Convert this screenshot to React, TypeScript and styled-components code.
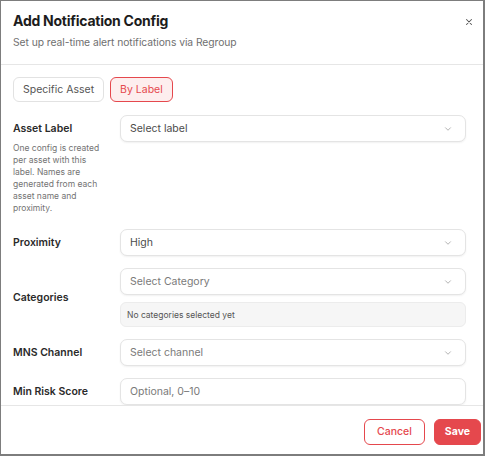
import React from 'react';
import styled, { createGlobalStyle } from 'styled-components';

const GlobalStyle = createGlobalStyle`
  html, body {
    margin: 0;
    padding: 0;
    background: #ffffff;
  }
  body {
    font-family: Inter, "Noto Sans", sans-serif;
    color: #1f1f1f;
  }
  * {
    box-sizing: border-box;
  }
`;

const Dialog = styled.div`
  width: 485px;
  height: 456px;
  display: flex;
  flex-direction: column;
  background: #ffffff;
  border: 1px solid #7d7d7d;
  border-right-width: 2px;
  border-bottom-width: 2px;
  overflow: hidden;
`;

const Header = styled.header`
  position: relative;
  flex: none;
  height: 64px;
  padding: 11px 13px 0 12px;
  border-bottom: 1px solid #e6e6e6;
`;

const Title = styled.h2`
  margin: 0;
  font-size: 14px;
  line-height: 18px;
  font-weight: 700;
  letter-spacing: -0.25px;
  color: #1c1c1c;
`;

const Subtitle = styled.p`
  margin: 5px 0 0;
  font-size: 10.3px;
  line-height: 14px;
  letter-spacing: -0.05px;
  color: #6f6f6f;
`;

const CloseButton = styled.button`
  position: absolute;
  top: 15px;
  right: 8px;
  width: 12px;
  height: 12px;
  padding: 0;
  border: none;
  background: none;
  color: #555555;
  cursor: pointer;
  display: flex;
  align-items: center;
  justify-content: center;
`;

const Body = styled.div`
  flex: 1;
  min-height: 0;
  overflow: hidden;
  padding: 12px 17px 0 12px;
`;

const Tabs = styled.div`
  display: flex;
  gap: 6px;
  margin-bottom: 13px;
`;

const Tab = styled.button<{ $active?: boolean }>`
  height: 25px;
  padding: 0 9px;
  border-radius: 6px;
  font-family: inherit;
  font-size: 10.5px;
  cursor: pointer;
  border: 1px solid ${(p) => (p.$active ? '#e5484d' : '#e2e2e2')};
  background: ${(p) => (p.$active ? '#fdeeee' : '#ffffff')};
  color: ${(p) => (p.$active ? '#e5484d' : '#555555')};
`;

const Form = styled.div`
  display: grid;
  grid-template-columns: 95px 1fr;
  column-gap: 12px;
  row-gap: 12px;
  align-items: center;
`;

const LabelCell = styled.div<{ $top?: boolean }>`
  align-self: ${(p) => (p.$top ? 'start' : 'center')};
  padding: ${(p) => (p.$top ? '7px 0 3px' : '0')};
`;

const FieldLabel = styled.label`
  display: block;
  font-size: 10.5px;
  font-weight: 600;
  color: #2a2a2a;
`;

const Hint = styled.p`
  margin: 7px 0 0;
  font-size: 8.5px;
  line-height: 12px;
  color: #737373;
`;

const FieldCell = styled.div<{ $top?: boolean }>`
  align-self: ${(p) => (p.$top ? 'start' : 'center')};
  display: flex;
  flex-direction: column;
  gap: 7px;
`;

const Select = styled.div`
  height: 27px;
  display: flex;
  align-items: center;
  justify-content: space-between;
  padding: 0 12px 0 9px;
  border: 1px solid #e4e4e4;
  border-radius: 7px;
  background: #ffffff;
  box-shadow: 0 1px 2px rgba(0, 0, 0, 0.06);
  font-size: 10.5px;
`;

const Placeholder = styled.span<{ $muted?: boolean }>`
  color: ${(p) => (p.$muted ? '#7a7a7a' : '#4b4b4b')};
`;

const EmptyBox = styled.div`
  height: 25px;
  display: flex;
  align-items: center;
  padding: 0 6px;
  border: 1px solid #ececec;
  border-radius: 6px;
  background: #f6f6f6;
  font-size: 8.5px;
  color: #555555;
`;

const Input = styled.input`
  height: 27px;
  width: 100%;
  padding: 0 9px;
  border: 1px solid #e4e4e4;
  border-radius: 7px;
  box-shadow: 0 1px 2px rgba(0, 0, 0, 0.06);
  font-family: inherit;
  font-size: 10.5px;
  color: #333333;
  outline: none;

  &::placeholder {
    color: #7a7a7a;
  }
`;

const Footer = styled.footer`
  flex: none;
  height: 49px;
  display: flex;
  justify-content: flex-end;
  align-items: center;
  gap: 9px;
  padding: 3px 2px 0 0;
  border-top: 1px solid #e6e6e6;
`;

const ActionButton = styled.button<{ $primary?: boolean }>`
  height: 26px;
  padding: 0 ${(p) => (p.$primary ? '10px' : '12px')};
  border-radius: 6px;
  font-family: inherit;
  font-size: 10.5px;
  font-weight: ${(p) => (p.$primary ? 700 : 500)};
  cursor: pointer;
  border: 1px solid #e5484d;
  background: ${(p) => (p.$primary ? '#e5484d' : '#ffffff')};
  color: ${(p) => (p.$primary ? '#ffffff' : '#e5484d')};
`;

const Chevron = () => (
  <svg width="10" height="10" viewBox="0 0 24 24" fill="none" stroke="#a3a3a3" strokeWidth="2" strokeLinecap="round" strokeLinejoin="round">
    <path d="m6 9 6 6 6-6" />
  </svg>
);

const CloseIcon = () => (
  <svg width="10" height="10" viewBox="0 0 24 24" fill="none" stroke="currentColor" strokeWidth="2.5" strokeLinecap="round">
    <path d="M18 6 6 18M6 6l12 12" />
  </svg>
);

const SelectField = ({ value, muted }: { value: string; muted?: boolean }) => (
  <Select>
    <Placeholder $muted={muted}>{value}</Placeholder>
    <Chevron />
  </Select>
);

const App = () => {
  return (
    <>
      <GlobalStyle />
      <Dialog>
        <Header>
          <Title>Add Notification Config</Title>
          <Subtitle>Set up real-time alert notifications via Regroup</Subtitle>
          <CloseButton aria-label="Close">
            <CloseIcon />
          </CloseButton>
        </Header>

        <Body>
          <Tabs>
            <Tab>Specific Asset</Tab>
            <Tab $active>By Label</Tab>
          </Tabs>

          <Form>
            <LabelCell $top>
              <FieldLabel>Asset Label</FieldLabel>
              <Hint>
                One config is created per asset with this label. Names are generated from each asset
                name and proximity.
              </Hint>
            </LabelCell>
            <FieldCell $top>
              <SelectField value="Select label" />
            </FieldCell>

            <LabelCell>
              <FieldLabel>Proximity</FieldLabel>
            </LabelCell>
            <FieldCell>
              <SelectField value="High" />
            </FieldCell>

            <LabelCell>
              <FieldLabel>Categories</FieldLabel>
            </LabelCell>
            <FieldCell>
              <SelectField value="Select Category" muted />
              <EmptyBox>No categories selected yet</EmptyBox>
            </FieldCell>

            <LabelCell>
              <FieldLabel>MNS Channel</FieldLabel>
            </LabelCell>
            <FieldCell>
              <SelectField value="Select channel" muted />
            </FieldCell>

            <LabelCell>
              <FieldLabel>Min Risk Score</FieldLabel>
            </LabelCell>
            <FieldCell>
              <Input placeholder="Optional, 0–10" />
            </FieldCell>
          </Form>
        </Body>

        <Footer>
          <ActionButton>Cancel</ActionButton>
          <ActionButton $primary>Save</ActionButton>
        </Footer>
      </Dialog>
    </>
  );
};

export default App;
